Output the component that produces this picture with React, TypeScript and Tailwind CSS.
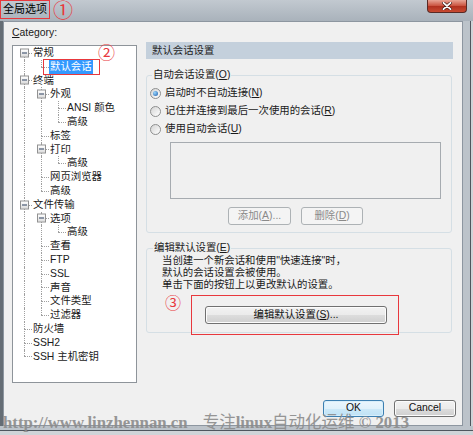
import React from "react";

type Node = { label: string; children?: Node[]; selected?: boolean };

const tree: Node[] = [
  { label: "常规", children: [{ label: "默认会话", selected: true }] },
  {
    label: "终端",
    children: [
      { label: "外观", children: [{ label: "ANSI 颜色" }, { label: "高级" }] },
      { label: "标签" },
      { label: "打印", children: [{ label: "高级" }] },
      { label: "网页浏览器" },
      { label: "高级" },
    ],
  },
  {
    label: "文件传输",
    children: [
      { label: "选项", children: [{ label: "高级" }] },
      { label: "查看" },
      { label: "FTP" },
      { label: "SSL" },
      { label: "声音" },
      { label: "文件类型" },
      { label: "过滤器" },
    ],
  },
  { label: "防火墙" },
  { label: "SSH2" },
  { label: "SSH 主机密钥" },
];

type Row = { node: Node; guides: boolean[]; hasNext: boolean; first: boolean };

function flatten(nodes: Node[], guides: boolean[] = [], out: Row[] = []) {
  nodes.forEach((node, i) => {
    const hasNext = i < nodes.length - 1;
    out.push({ node, guides, hasNext, first: guides.length === 0 && i === 0 });
    if (node.children) flatten(node.children, [...guides, hasNext], out);
  });
  return out;
}

const dots = "border-dotted border-[#a0a0a0]";

function TreeRow({ row }: { row: Row }) {
  const { node } = row;
  return (
    <div className="flex h-[13.8px] items-stretch leading-[13.8px]">
      {row.guides.map((g, i) => (
        <div key={i} className="relative w-[17px] shrink-0">
          {g && <div className={`absolute bottom-0 left-[8px] top-0 border-l ${dots}`} />}
        </div>
      ))}
      <div className="relative w-[17px] shrink-0">
        {!row.first && <div className={`absolute left-[8px] top-0 h-1/2 border-l ${dots}`} />}
        {row.hasNext && <div className={`absolute bottom-0 left-[8px] top-1/2 border-l ${dots}`} />}
        <div className={`absolute left-[8px] right-[1px] top-1/2 border-t ${dots}`} />
        {node.children && (
          <div className="absolute left-[4px] top-1/2 flex h-[9px] w-[9px] -translate-y-1/2 items-center justify-center border border-[#919191] bg-[linear-gradient(to_bottom,#ffffff,#dcdcdc)]">
            <span className="h-[1px] w-[5px] bg-[#2a3f5f]" />
          </div>
        )}
      </div>
      {node.selected ? (
        <span className="relative -ml-px whitespace-nowrap bg-[#3399ff] px-px text-white">
          {node.label}
          <span className="absolute -bottom-[1px] -left-[6px] -right-[7px] -top-[1px] border border-[#e8383d]" />
          <span className="absolute -top-[14px] left-[49px] text-[17px] leading-[16px] text-[#e8383d]">②</span>
        </span>
      ) : (
        <span className="whitespace-nowrap text-[#1a1a1a]">{node.label}</span>
      )}
    </div>
  );
}

function Radio({ checked }: { checked?: boolean }) {
  return (
    <span className="flex h-[11px] w-[11px] shrink-0 items-center justify-center rounded-full border border-[#8e8f8f] bg-[linear-gradient(135deg,#d4d4d4,#ffffff)]">
      {checked && (
        <span className="h-[5px] w-[5px] rounded-full bg-[radial-gradient(circle_at_35%_35%,#9ad8ff,#1c5aa8)]" />
      )}
    </span>
  );
}

const btn =
  "flex items-center justify-center rounded-[3px] border text-[10.4px] leading-none";
const btnNormal =
  "border-[#707070] bg-[linear-gradient(to_bottom,#f2f2f2_0%,#ebebeb_50%,#dddddd_50%,#cfcfcf_100%)] shadow-[inset_0_0_0_1px_#fcfcfc] text-[#111]";
const btnDisabled = "border-[#adb2b5] bg-[#f4f4f4] text-[#8a8a8a]";

export default function App() {
  const rows = flatten(tree);
  return (
    <div className="relative flex h-[435px] w-[473px] flex-col overflow-hidden bg-[#aab3bc] font-['Liberation_Sans','Noto_Sans_CJK_SC',sans-serif] text-[10.4px] text-[#1a1a1a]">
      {/* title bar */}
      <div className="flex h-[21px] shrink-0 items-start bg-[linear-gradient(to_bottom,#c2c9d0,#a9b2bb)]">
        <div className="flex h-[19px] w-[50px] items-center border border-[#e8383d] pl-[2px] text-[11px] text-black">
          全局选项
        </div>
        <span className="ml-[3px] mt-[2px] text-[20px] leading-[19px] text-[#e8383d]">①</span>
        <div className="ml-auto mr-[6px] flex h-[13px] w-[40px] items-center justify-center rounded-b-[4px] border border-t-0 border-[#5a2a25] bg-[linear-gradient(to_bottom,#e8a495,#c9503c_50%,#b0301e_51%,#c84a32)]">
          <svg width="10" height="8" viewBox="0 0 10 8">
            <path d="M1.5 0.8 L8.5 7.2 M8.5 0.8 L1.5 7.2" stroke="#3a1a16" strokeWidth="3" strokeLinecap="round" />
            <path d="M1.5 0.8 L8.5 7.2 M8.5 0.8 L1.5 7.2" stroke="#ffffff" strokeWidth="1.8" strokeLinecap="round" />
          </svg>
        </div>
      </div>

      <div className="flex h-[405px] shrink-0">
        <div className="w-[3px] bg-[#656d75]" />
        {/* client */}
        <div className="flex w-[460px] flex-col border border-[#8d96a0] bg-[#f0f0f0]">
          <div className="flex">
            {/* left column */}
            <div className="ml-[8px] flex w-[125px] flex-col">
              <div className="mt-[5px] h-[12px] leading-[12px]">
                <u>C</u>ategory:
              </div>
              <div className="mt-[6px] h-[338px] border border-[#8e949a] bg-white pl-[3px]">
                {rows.map((r, i) => (
                  <TreeRow key={i} row={r} />
                ))}
              </div>
            </div>

            {/* right column */}
            <div className="ml-[9px] flex w-[307px] flex-col">
              <div className="mt-[20px] flex h-[17px] items-center bg-[#c4d0dc] pl-[6px] text-[#1e1e1e]">
                默认会话设置
              </div>

              <fieldset className="mt-[10px] w-[306px] rounded-[3px] border border-[#d5dfe5] pb-[7px]">
                <legend className="ml-[5px] px-px leading-[12px]">
                  自动会话设置(<u>O</u>)
                </legend>
                <div className="pl-[3px] pt-[3px]">
                  <div className="flex h-[18px] items-center">
                    <Radio checked />
                    <span className="ml-[4px]">
                      启动时不自动连接(<u>N</u>)
                    </span>
                  </div>
                  <div className="flex h-[18px] items-center">
                    <Radio />
                    <span className="ml-[4px]">
                      记住并连接到最后一次使用的会话(<u>R</u>)
                    </span>
                  </div>
                  <div className="flex h-[18px] items-center">
                    <Radio />
                    <span className="ml-[4px]">
                      使用自动会话(<u>U</u>)
                    </span>
                  </div>
                </div>
                <div className="ml-[23px] mt-[4px] h-[57px] w-[271px] border border-[#a6abb0] bg-[#f0f0f0]" />
                <div className="ml-[81px] mt-[8px] flex gap-[10px]">
                  <div className={`${btn} ${btnDisabled} h-[18px] w-[63px]`}>
                    添加(<u>A</u>)...
                  </div>
                  <div className={`${btn} ${btnDisabled} h-[18px] w-[62px]`}>
                    删除(<u>D</u>)
                  </div>
                </div>
              </fieldset>

              <fieldset className="mt-[9px] w-[306px] rounded-[3px] border border-[#d5dfe5]">
                <legend className="ml-[6px] px-px leading-[12px]">
                  编辑默认设置(<u>E</u>)
                </legend>
                <div className="mt-px pl-[15px] leading-[12px]">
                  <div>当创建一个新会话和使用"快速连接"时，</div>
                  <div>默认的会话设置会被使用。</div>
                  <div>单击下面的按钮上以更改默认的设置。</div>
                </div>
                <div className="mb-[-3px] mt-[4px] flex items-start pl-[18px]">
                  <span className="mt-[1px] w-[17px] text-[16px] leading-[15px] text-[#e8383d]">③</span>
                  <div className="ml-[9px] h-[40px] w-[208px] border border-[#e8383d] pl-[13px] pt-[10px]">
                    <div className={`${btn} ${btnNormal} h-[18px] w-[182px]`}>
                      编辑默认设置(<u>S</u>)...
                    </div>
                  </div>
                </div>
              </fieldset>
            </div>
          </div>

          <div className="mt-auto flex justify-end gap-[10px] pb-[8px] pr-[6px]">
            <div className={`${btn} h-[17px] w-[61px] border-[#3c7fb1] bg-[linear-gradient(to_bottom,#eaf6fd_0%,#e0f1fb_50%,#cde9f8_50%,#bfe2f6_100%)] shadow-[inset_0_0_0_1px_#d8eefa] text-[#111]`}>
              OK
            </div>
            <div className={`${btn} ${btnNormal} h-[17px] w-[62px]`}>Cancel</div>
          </div>
        </div>
        <div className="flex w-[10px]">
          <div className="w-[7px] bg-[#bcc3ca]" />
          <div className="w-px bg-[#4f565e]" />
          <div className="w-[2px] bg-[#d0d4d8]" />
        </div>
      </div>

      <div className="flex h-[9px] shrink-0 flex-col">
        <div className="h-[4px] bg-[#bcc3ca]" />
        <div className="h-px bg-[#4f565e]" />
        <div className="flex-1 bg-[#d0d4d8]" />
      </div>

      {/* watermark */}
      <div className="pointer-events-none absolute left-[3px] top-[409px] flex items-baseline whitespace-nowrap text-[#8c8c8c] opacity-90">
        <span className="font-['Liberation_Serif',serif] text-[16.8px] font-bold">http://www.linzhennan.cn</span>
        <span className="ml-[15px] font-['Noto_Sans_CJK_SC',sans-serif] text-[16.5px]">专注</span>
        <span className="font-['Liberation_Serif',serif] text-[16.8px] font-bold">linux</span>
        <span className="font-['Noto_Sans_CJK_SC',sans-serif] text-[16.5px]">自动化运维</span>
        <span className="font-['Liberation_Serif',serif] text-[16.8px] font-bold">&nbsp;©&nbsp;2013</span>
      </div>
    </div>
  );
}
